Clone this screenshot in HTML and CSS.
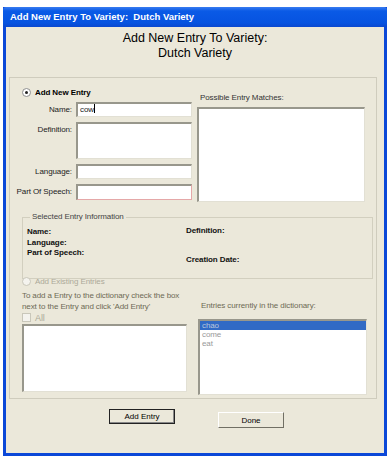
FILE: index.html
```html
<!DOCTYPE html>
<html lang="en">

<head>
    <meta charset="utf-8">
    <title>Add New Entry To Variety</title>
    <link rel="stylesheet" href="styles.css">
</head>

<body>

    <div class="vindue">
        <div class="titel">Add New Entry To Variety:&nbsp; Dutch Variety</div>

        <h1>Add New Entry To Variety:<br>Dutch Variety</h1>

        <div class="gruppe">

            <div class="raekke">
                <div class="venstre">
                    <label class="radio valgt"><span class="prik"></span>Add New Entry</label>
                    <div class="formular">
                        <span>Name:</span>
                        <div class="felt">cow<span class="markoer"></span></div>
                        <span class="top">Definition:</span>
                        <div class="felt hoej"></div>
                        <span>Language:</span>
                        <div class="felt"></div>
                        <span>Part Of Speech:</span>
                        <div class="felt roed"></div>
                    </div>
                </div>
                <div class="hoejre">
                    <div class="etiket">Possible Entry Matches:</div>
                    <div class="liste matches"></div>
                </div>
            </div>

            <fieldset class="info">
                <legend>Selected Entry Information</legend>
                <div class="infokol">
                    <b>Name:</b>
                    <b>Language:</b>
                    <b>Part of Speech:</b>
                </div>
                <div class="infokol spredt">
                    <b>Definition:</b>
                    <b>Creation Date:</b>
                </div>
            </fieldset>

            <label class="radio slukket"><span class="prik tom"></span>Add Existing Entries</label>

            <div class="raekke nederst">
                <div class="venstre2">
                    <p class="hjaelp">To add a Entry to the dictionary check the box<br>next to the Entry and click 'Add Entry'</p>
                    <label class="boks"><span class="kasse"></span>All</label>
                    <div class="liste venstreliste"></div>
                </div>
                <div class="hoejre2">
                    <div class="etiket oliven">Entries currently in the dictionary:</div>
                    <div class="liste ordbog">
                        <div class="post markeret">chao</div>
                        <div class="post">come</div>
                        <div class="post">eat</div>
                    </div>
                </div>
            </div>
        </div>

        <div class="knapper">
            <button class="standard">Add Entry</button>
            <button class="done">Done</button>
        </div>
    </div>

</body>

</html>
```
FILE: styles.css
```css
* {
    box-sizing: border-box;
    padding: 0;
    margin: 0;
}

body {
    background: white;
    font-family: "Liberation Sans", Arial, sans-serif;
    font-size: 8px;
    letter-spacing: -0.1px;
    color: #000;
}

.vindue {
    margin: 7px 0 0 3px;
    width: 384px;
    height: 449px;
    background: #ebe8da;
    border: 3px solid #0b48d8;
    border-top: none;
}

.titel {
    height: 20px;
    margin: 0 -3px;
    padding: 0 0 0 7px;
    background: linear-gradient(#3a7cf0, #0a5ae6 20%, #0653e0 80%, #0a48cf);
    color: white;
    font-weight: bold;
    font-size: 9.5px;
    letter-spacing: 0;
    line-height: 20px;
    border-radius: 3px 3px 0 0;
}

h1 {
    font-size: 12.5px;
    font-weight: normal;
    letter-spacing: 0;
    text-align: center;
    line-height: 15px;
    margin-top: 4px;
}

.gruppe {
    margin: 16px 7px 0 3px;
    height: 322px;
    border: 1px solid #cfccbd;
}

.raekke {
    display: flex;
    gap: 5px;
}

.venstre {
    width: 182px;
    padding-top: 9px;
}

.radio {
    display: flex;
    align-items: center;
    height: 11px;
    margin-left: 12px;
    font-weight: bold;
}

.prik {
    width: 9px;
    height: 9px;
    border-radius: 50%;
    background: white;
    border: 1px solid #8e8f8f;
    margin-right: 4px;
    position: relative;
}

.valgt .prik::after {
    content: "";
    position: absolute;
    left: 2px;
    top: 2px;
    width: 3px;
    height: 3px;
    border-radius: 50%;
    background: #222;
}

.formular {
    display: grid;
    grid-template-columns: 62px 116px;
    grid-template-rows: 15px 37px 15px 16px;
    column-gap: 4px;
    row-gap: 5px;
    margin-top: 4px;
    color: #222;
}

.formular span {
    text-align: right;
    line-height: 15px;
}

.formular span.top {
    align-self: start;
}

.felt {
    background: white;
    border-top: 2px solid #98978c;
    border-left: 2px solid #98978c;
    border-right: 1px solid #e2e0d4;
    border-bottom: 1px solid #e2e0d4;
    padding-left: 2px;
    line-height: 12px;
}

.markoer {
    display: inline-block;
    width: 1px;
    height: 9px;
    background: #000;
    vertical-align: -1px;
}

.felt.roed {
    border-bottom-color: #e5a8a8;
    border-right-color: #e5a8a8;
}

.hoejre {
    padding-top: 15px;
}

.etiket {
    height: 10px;
    line-height: 10px;
    margin: 0 0 4px 3px;
    color: #333;
}

.liste {
    background: white;
    border-top: 2px solid #98978c;
    border-left: 2px solid #98978c;
    border-right: 1px solid #e2e0d4;
    border-bottom: 1px solid #e2e0d4;
}

.matches {
    width: 168px;
    height: 95px;
}

.info {
    margin: 10px 3px 0 12px;
    height: 67px;
    border: 1px solid #d2cfbf;
    padding: 0 0 0 4px;
    display: grid;
    grid-template-columns: 159px 1fr;
}

.info legend {
    margin-left: 3px;
    padding: 0 2px;
    color: #444;
    line-height: 10px;
}

.infokol {
    display: flex;
    flex-direction: column;
    padding-top: 5px;
    line-height: 10.5px;
    color: #111;
}

.spredt {
    padding-top: 4px;
    gap: 18px;
}

.slukket {
    font-weight: normal;
    color: #aca899;
    margin-top: -3px;
    height: 10px;
}

.prik.tom {
    border-color: #c9c7ba;
    background: #f4f3ee;
}

.nederst {
    gap: 11px;
}

.venstre2 {
    width: 177px;
    padding-left: 12px;
}

.hjaelp {
    margin-top: 4px;
    line-height: 11px;
    color: #6d6a55;
}

.boks {
    display: flex;
    align-items: center;
    height: 11px;
    color: #aca899;
    font-size: 9px;
}

.kasse {
    width: 9px;
    height: 9px;
    border: 1px solid #c9c7ba;
    background: #f4f3ee;
    margin-right: 4px;
}

.venstreliste {
    width: 165px;
    height: 68px;
    margin-top: 1px;
}

.hoejre2 {
    padding-top: 15px;
}

.oliven {
    color: #6d6a55;
    margin-bottom: 8px;
}

.ordbog {
    width: 169px;
    height: 76px;
    color: #999;
    line-height: 9px;
}

.post {
    padding-left: 2px;
}

.markeret {
    background: #316ac5;
    color: #b9c6dc;
}

.knapper {
    display: flex;
    align-items: flex-start;
    gap: 43px;
    margin: 10px 0 0 103px;
}

.knapper button {
    width: 66px;
    height: 16px;
    font-family: "Liberation Sans", Arial, sans-serif;
    font-size: 8px;
    background: #ebe8da;
    border: 1px solid #fff;
    border-right-color: #716f64;
    border-bottom-color: #716f64;
}

.knapper .standard {
    height: 15px;
    border: 1px solid #222;
    box-shadow: inset -1px -1px #888;
}

.knapper .done {
    margin-top: 3px;
}
```
